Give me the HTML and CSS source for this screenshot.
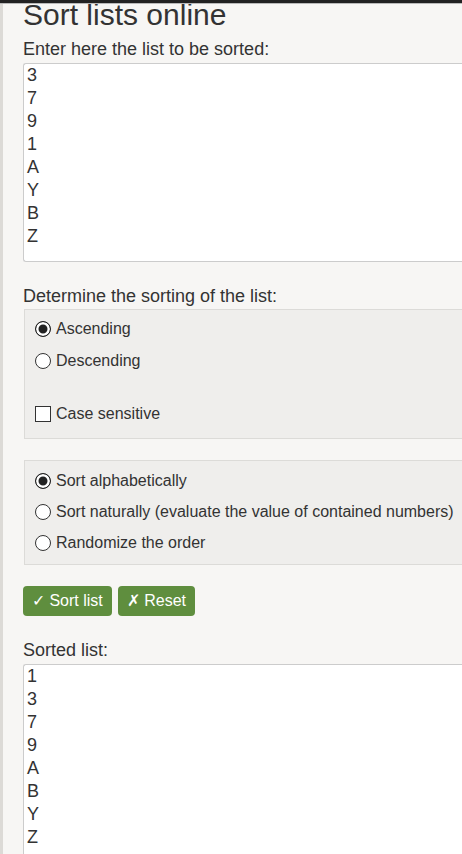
FILE: index.html
```html
<!DOCTYPE html>
<html lang="en">
<head>
<meta charset="utf-8">
<title>Sort lists online</title>
<link rel="stylesheet" href="styles.css">
</head>
<body>
<div class="topbar"></div>
<main class="page">
  <h1 class="title">Sort lists online</h1>
  <label class="label" for="input">Enter here the list to be sorted:</label>
  <textarea id="input" class="list">3
7
9
1
A
Y
B
Z</textarea>

  <div class="label label-gap">Determine the sorting of the list:</div>
  <div class="box box-order">
    <label class="opt"><input type="radio" name="dir" checked><span>Ascending</span></label>
    <label class="opt"><input type="radio" name="dir"><span>Descending</span></label>
    <div class="spacer"></div>
    <label class="opt"><input type="checkbox"><span>Case sensitive</span></label>
  </div>

  <div class="box box-mode">
    <label class="opt opt-sm"><input type="radio" name="mode" checked><span>Sort alphabetically</span></label>
    <label class="opt opt-sm"><input type="radio" name="mode"><span>Sort naturally (evaluate the value of contained numbers)</span></label>
    <label class="opt opt-sm"><input type="radio" name="mode"><span>Randomize the order</span></label>
  </div>

  <div class="buttons">
    <button class="btn"><span class="sym">✓</span> Sort list</button>
    <button class="btn"><span class="sym">✗</span> Reset</button>
  </div>

  <label class="label label-gap" for="output">Sorted list:</label>
  <textarea id="output" class="list">1
3
7
9
A
B
Y
Z</textarea>
</main>
</body>
</html>
```

FILE: styles.css
```css
html, body {
  margin: 0;
  padding: 0;
}
body {
  background: #f7f6f4;
  border-left: 3px solid #dcdad6;
  overflow: hidden;
  height: 854px;
  box-sizing: border-box;
  font-family: "Liberation Sans", Arial, sans-serif;
  color: #333;
}
.topbar {
  position: fixed;
  top: 0;
  left: 0;
  right: 0;
  height: 3px;
  background: #222;
  border-bottom: 1px solid #b9b9b9;
  z-index: 2;
}
.page {
  padding-left: 20px;
  width: 439px;
  display: flex;
  flex-direction: column;
  align-items: flex-start;
}
.title {
  margin: 0;
  font-size: 30px;
  line-height: 30px;
  font-weight: normal;
  color: #333;
}
.label {
  display: block;
  font-size: 18px;
  line-height: 24px;
  margin-top: 7px;
}
.label-gap {
  margin-top: 22px;
}
.list {
  display: block;
  margin: 2px -12px 0 0;
  width: calc(100% + 12px);
  height: 199px;
  box-sizing: border-box;
  padding: 0 3px;
  border: 1px solid #cccccc;
  border-right: none;
  border-radius: 3px 0 0 3px;
  background: #fff;
  font-family: "Liberation Sans", Arial, sans-serif;
  font-size: 18px;
  line-height: 23px;
  color: #333;
  resize: none;
  overflow: hidden;
}
.box {
  margin-left: 1px;
  width: calc(100% + 11px);
  box-sizing: border-box;
  background: #efeeec;
  border: 1px solid #dcdbd8;
  border-right: none;
  padding: 0 0 0 10px;
  display: flex;
  flex-direction: column;
}
.box-order {
  margin-top: 1px;
  padding-top: 3px;
  padding-bottom: 8px;
}
.box-mode {
  margin-top: 21px;
  padding-top: 4px;
  padding-bottom: 6px;
}
.spacer {
  height: 21px;
}
.opt {
  display: flex;
  align-items: center;
  height: 32px;
  font-size: 16px;
  gap: 5px;
  white-space: nowrap;
}
.opt-sm {
  height: 31px;
}
.opt input {
  appearance: none;
  -webkit-appearance: none;
  margin: 0;
  width: 16px;
  height: 16px;
  flex: none;
  box-sizing: border-box;
  background: #fff;
  border: 1px solid #333;
}
.opt input[type="radio"] {
  border-radius: 50%;
}
.opt input[type="radio"]:checked {
  border: 1.5px solid #222;
  background: #222;
  box-shadow: inset 0 0 0 2.5px #fff;
}
.opt input[type="checkbox"] {
  border-radius: 0;
}
.buttons {
  display: flex;
  gap: 6px;
  margin-top: 21px;
}
.btn {
  height: 30px;
  padding: 0 9px;
  border: none;
  border-radius: 4px;
  background: #5f8e3e;
  color: #fff;
  font-family: "Liberation Sans", Arial, sans-serif;
  font-size: 16px;
  line-height: 30px;
}
.sym {
  font-family: "DejaVu Sans", sans-serif;
  font-weight: 200;
}
```
